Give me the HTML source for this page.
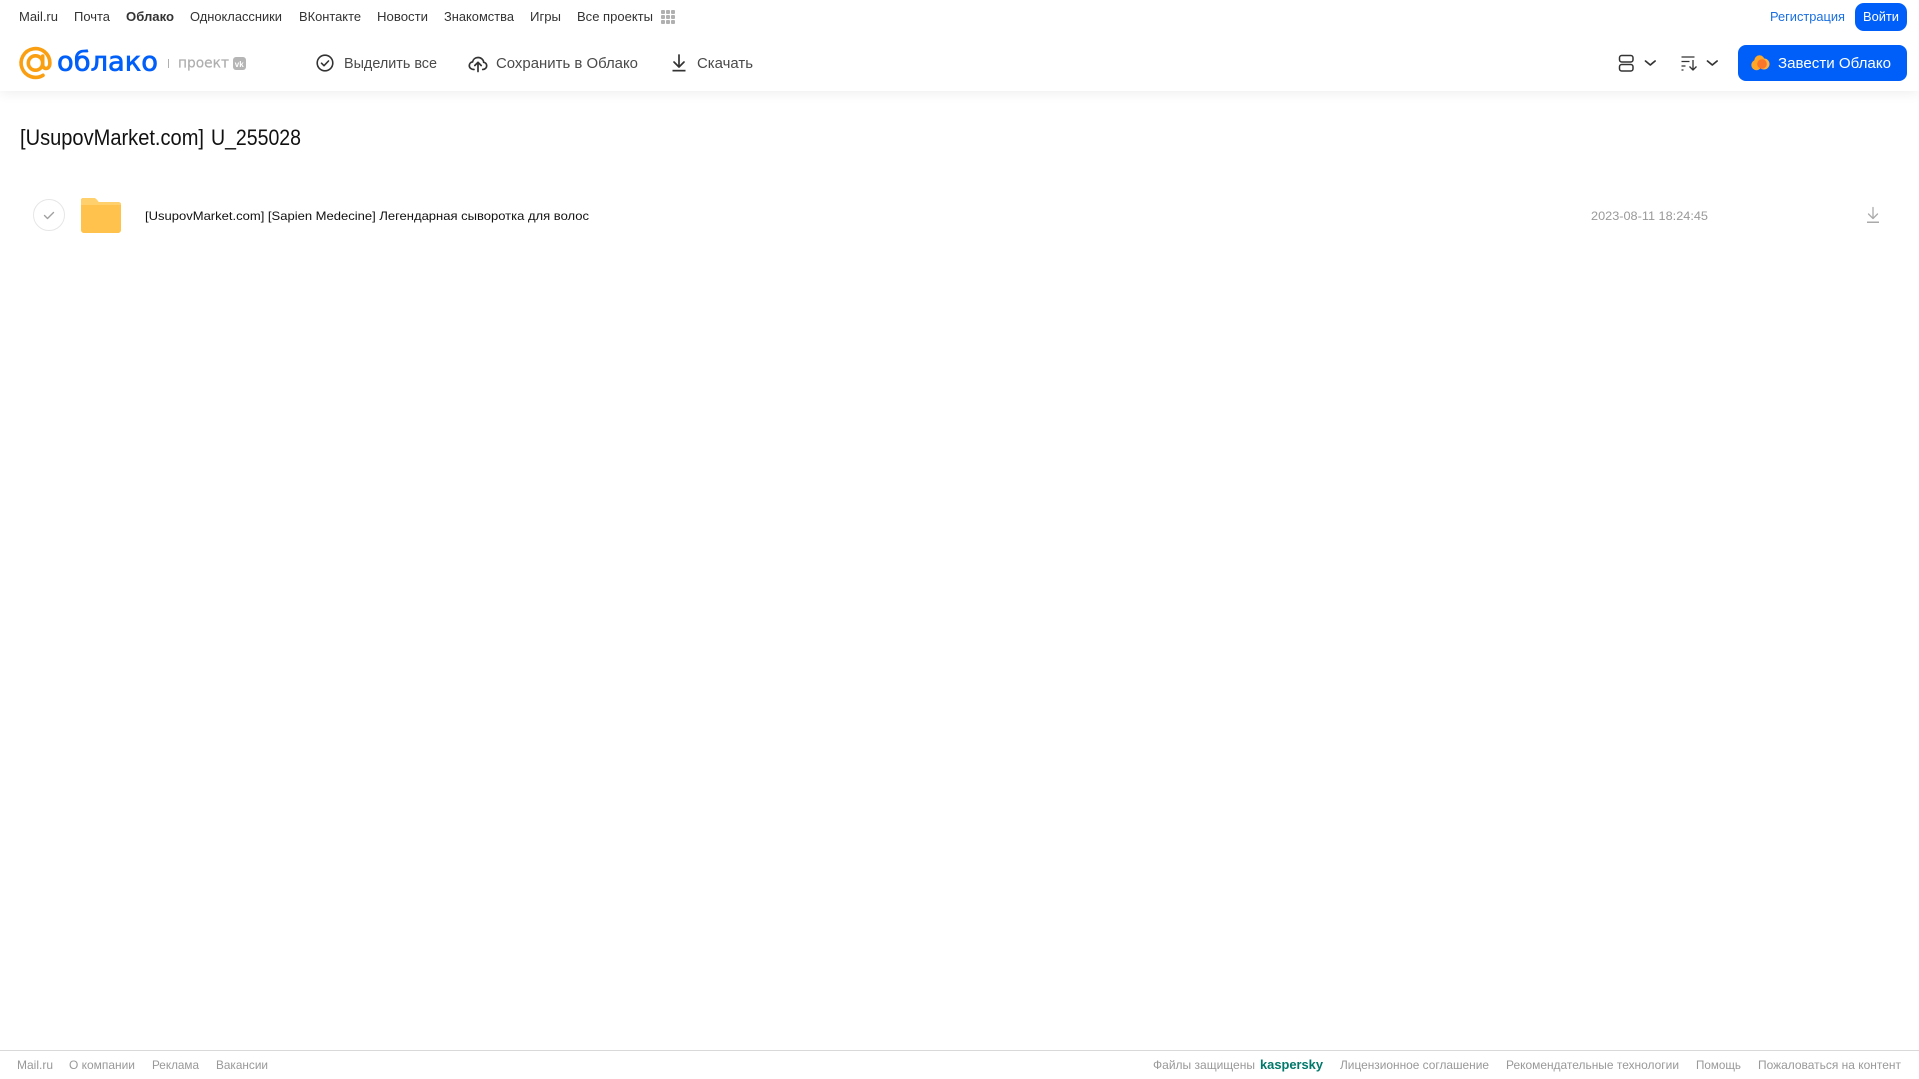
<!DOCTYPE html>
<html lang="ru"><head><meta charset="utf-8"><title>Облако</title>
<style>
html,body{margin:0;padding:0;width:1919px;height:1079px;overflow:hidden;background:#fff}
.bar{position:absolute;left:0;top:0;width:1919px;height:91px;background:#fff;box-shadow:0 2px 12px rgba(0,0,0,.07)}
svg{position:absolute;left:0;top:0}
text{font-family:"Liberation Sans",Arial,sans-serif}
.n{font-size:13px;fill:#333}
.t{font-size:15px;fill:#4a4a4a}
.f{font-size:12px;fill:#999}
</style></head><body>
<div class="bar"></div>
<svg width="1919" height="1079" viewBox="0 0 1919 1079" xmlns="http://www.w3.org/2000/svg">
<!-- top nav -->
<g class="n">
<text class="n" x="19" y="21" textLength="39" lengthAdjust="spacingAndGlyphs">Mail.ru</text>
<text class="n" x="74" y="21" textLength="36" lengthAdjust="spacingAndGlyphs">Почта</text>
<text class="n" x="126" y="21" textLength="48" lengthAdjust="spacingAndGlyphs" font-weight="700">Облако</text>
<text class="n" x="190" y="21" textLength="92" lengthAdjust="spacingAndGlyphs">Одноклассники</text>
<text class="n" x="299" y="21" textLength="62" lengthAdjust="spacingAndGlyphs">ВКонтакте</text>
<text class="n" x="377" y="21" textLength="51" lengthAdjust="spacingAndGlyphs">Новости</text>
<text class="n" x="444" y="21" textLength="70" lengthAdjust="spacingAndGlyphs">Знакомства</text>
<text class="n" x="530" y="21" textLength="31" lengthAdjust="spacingAndGlyphs">Игры</text>
<text class="n" x="577" y="21" textLength="76" lengthAdjust="spacingAndGlyphs">Все проекты</text>
</g>
<g fill="#b0b0b0">
<rect x="661" y="10" width="4" height="4" rx="1"/><rect x="666" y="10" width="4" height="4" rx="1"/><rect x="671" y="10" width="4" height="4" rx="1"/>
<rect x="661" y="15" width="4" height="4" rx="1"/><rect x="666" y="15" width="4" height="4" rx="1"/><rect x="671" y="15" width="4" height="4" rx="1"/>
<rect x="661" y="20" width="4" height="4" rx="1"/><rect x="666" y="20" width="4" height="4" rx="1"/><rect x="671" y="20" width="4" height="4" rx="1"/>
</g>
<text x="1770" y="21" font-size="13" fill="#1a6fe0" textLength="75" lengthAdjust="spacingAndGlyphs">Регистрация</text>
<rect x="1855" y="3" width="52" height="28" rx="9" fill="#005ff9"/>
<text x="1863" y="21" font-size="13" fill="#fff" textLength="36" lengthAdjust="spacingAndGlyphs">Войти</text>

<!-- logo -->
<g fill="none" stroke="#fa9f12" stroke-width="3.600" stroke-linecap="round">
<circle cx="35.500" cy="63" r="7.200"/>
<path d="M42.700 56v8.500c0 2.600 1.700 4 3.500 4s3.700-1.800 3.700-5.500A14.400 14.400 0 1 0 43 75.300"/>
</g>
<text x="57" y="70.500" font-size="27" font-weight="400" fill="#005ff9" stroke="#005ff9" stroke-width=".7" style="font-family:'DejaVu Sans',sans-serif" textLength="101" lengthAdjust="spacingAndGlyphs">облако</text>
<rect x="168" y="59" width="1" height="9" fill="#b0b0b0"/>
<text x="178" y="67.500" font-size="14" fill="#aeaeae" stroke="#aeaeae" stroke-width=".2" style="font-family:'DejaVu Sans',sans-serif" textLength="51" lengthAdjust="spacingAndGlyphs">проект</text>
<rect x="233" y="57" width="13" height="13" rx="3" fill="#b5b5b5"/>
<text x="234.800" y="66.800" font-size="8" font-weight="700" fill="#fff">vk</text>

<!-- toolbar -->
<circle cx="325" cy="63" r="7.800" fill="none" stroke="#333" stroke-width="1.600"/>
<path d="M321.500 63.200l2.500 2.500 4.500-4.700" fill="none" stroke="#333" stroke-width="1.600" stroke-linecap="round" stroke-linejoin="round"/>
<text class="t" x="344" y="68" textLength="93" lengthAdjust="spacingAndGlyphs">Выделить все</text>
<path d="M474 69.500c-2.700 0-4.700-1.700-4.700-3.900 0-1.900 1.400-3.400 3.200-3.700.6-2.600 2.800-4.400 5.500-4.400 3 0 5.400 2.100 5.700 4.800 1.800.3 3 1.700 3 3.400 0 2.100-1.700 3.800-4 3.800" fill="none" stroke="#333" stroke-width="1.700" stroke-linecap="round"/>
<path d="M478 71.500v-9M474.800 65.500l3.200-3.200 3.200 3.200" fill="none" stroke="#333" stroke-width="1.700" stroke-linecap="round" stroke-linejoin="round"/>
<text class="t" x="496" y="68" textLength="142" lengthAdjust="spacingAndGlyphs">Сохранить в Облако</text>
<path d="M679 55v11.500M674 62l5 5 5-5" fill="none" stroke="#333" stroke-width="1.700" stroke-linecap="round" stroke-linejoin="round"/>
<rect x="672.500" y="69.800" width="13" height="1.700" fill="#333"/>
<text class="t" x="697" y="68" textLength="56" lengthAdjust="spacingAndGlyphs">Скачать</text>

<!-- right toolbar -->
<g fill="none" stroke="#333" stroke-width="1.500">
<rect x="1619.500" y="55.500" width="13.500" height="6.500" rx="2.200"/>
<rect x="1619.500" y="64.500" width="13.500" height="6.500" rx="2.200"/>
</g>
<path d="M1645.500 61l4.800 4 4.800-4M1707.500 61l4.800 4 4.800-4" fill="none" stroke="#333" stroke-width="1.700" stroke-linecap="round" stroke-linejoin="round"/>
<path d="M1681.500 57h13M1681.500 61.500h8M1681.500 66h4M1681.500 70h2M1693 60v9.500M1689.500 66.500l3.500 3.500 3.500-3.500" fill="none" stroke="#333" stroke-width="1.300" stroke-linejoin="round"/>
<rect x="1738" y="45" width="169" height="36" rx="8" fill="#005ff9"/>
<circle cx="1764" cy="64" r="5.500" fill="#ffb340"/>
<circle cx="1756.500" cy="65" r="5.200" fill="#ffa726"/>
<circle cx="1759.500" cy="60.500" r="5.200" fill="#ffa726"/>
<circle cx="1762" cy="64" r="4.800" fill="#f9762a"/>
<text x="1778" y="68" font-size="15" fill="#fff" textLength="113" lengthAdjust="spacingAndGlyphs">Завести Облако</text>

<!-- title -->
<text x="20" y="145" font-size="22" fill="#111" textLength="184" lengthAdjust="spacingAndGlyphs">[UsupovMarket.com]</text>
<text x="211" y="145" font-size="22" fill="#111" textLength="90" lengthAdjust="spacingAndGlyphs">U_255028</text>

<!-- row -->
<circle cx="49" cy="215" r="15.500" fill="#fff" stroke="#e6e6e6"/>
<path d="M44.500 215.500l3 3 6-6" fill="none" stroke="#a0a0a0" stroke-width="1.400" stroke-linecap="round" stroke-linejoin="round"/>
<path d="M83 198h10.500c1.500 0 2.500.7 3.500 2l1.700 2H118c1.700 0 3 1.300 3 3v25c0 1.700-1.300 3-3 3H84c-1.700 0-3-1.300-3-3v-30c0-1.100.9-2 2-2z" fill="#ffc24d"/>
<path d="M81 205h40v-1c0-1.200-1.300-2-3-2H98.700l-1.700-2c-1-1.300-2-2-3.500-2H83c-1.100 0-2 .9-2 2z" fill="#ffd06b"/>
<text x="145" y="220" font-size="12" fill="#111" textLength="444" lengthAdjust="spacingAndGlyphs">[UsupovMarket.com] [Sapien Medecine] Легендарная сыворотка для волос</text>
<text x="1591" y="220" font-size="12" fill="#999" textLength="117" lengthAdjust="spacingAndGlyphs">2023-08-11 18:24:45</text>
<path d="M1873 207.500v11M1868.500 214l4.500 4.500 4.500-4.500" fill="none" stroke="#aaa" stroke-width="1.300" stroke-linecap="round" stroke-linejoin="round"/>
<rect x="1867" y="221.500" width="12" height="1.500" fill="#aaa"/>

<!-- footer -->
<rect x="0" y="1050" width="1919" height="1" fill="#d9d9d9"/>
<text class="f" x="17" y="1069" textLength="36" lengthAdjust="spacingAndGlyphs">Mail.ru</text>
<text class="f" x="69" y="1069" textLength="66" lengthAdjust="spacingAndGlyphs">О компании</text>
<text class="f" x="152" y="1069" textLength="47" lengthAdjust="spacingAndGlyphs">Реклама</text>
<text class="f" x="216" y="1069" textLength="52" lengthAdjust="spacingAndGlyphs">Вакансии</text>
<text class="f" x="1153" y="1069" textLength="102" lengthAdjust="spacingAndGlyphs">Файлы защищены</text>
<text x="1260" y="1069" font-size="13" font-weight="700" fill="#00796b" textLength="63" lengthAdjust="spacingAndGlyphs">kaspersky</text>
<text class="f" x="1340" y="1069" textLength="149" lengthAdjust="spacingAndGlyphs">Лицензионное соглашение</text>
<text class="f" x="1506" y="1069" textLength="173" lengthAdjust="spacingAndGlyphs">Рекомендательные технологии</text>
<text class="f" x="1696" y="1069" textLength="45" lengthAdjust="spacingAndGlyphs">Помощь</text>
<text class="f" x="1758" y="1069" textLength="143" lengthAdjust="spacingAndGlyphs">Пожаловаться на контент</text>
</svg>
</body></html>
